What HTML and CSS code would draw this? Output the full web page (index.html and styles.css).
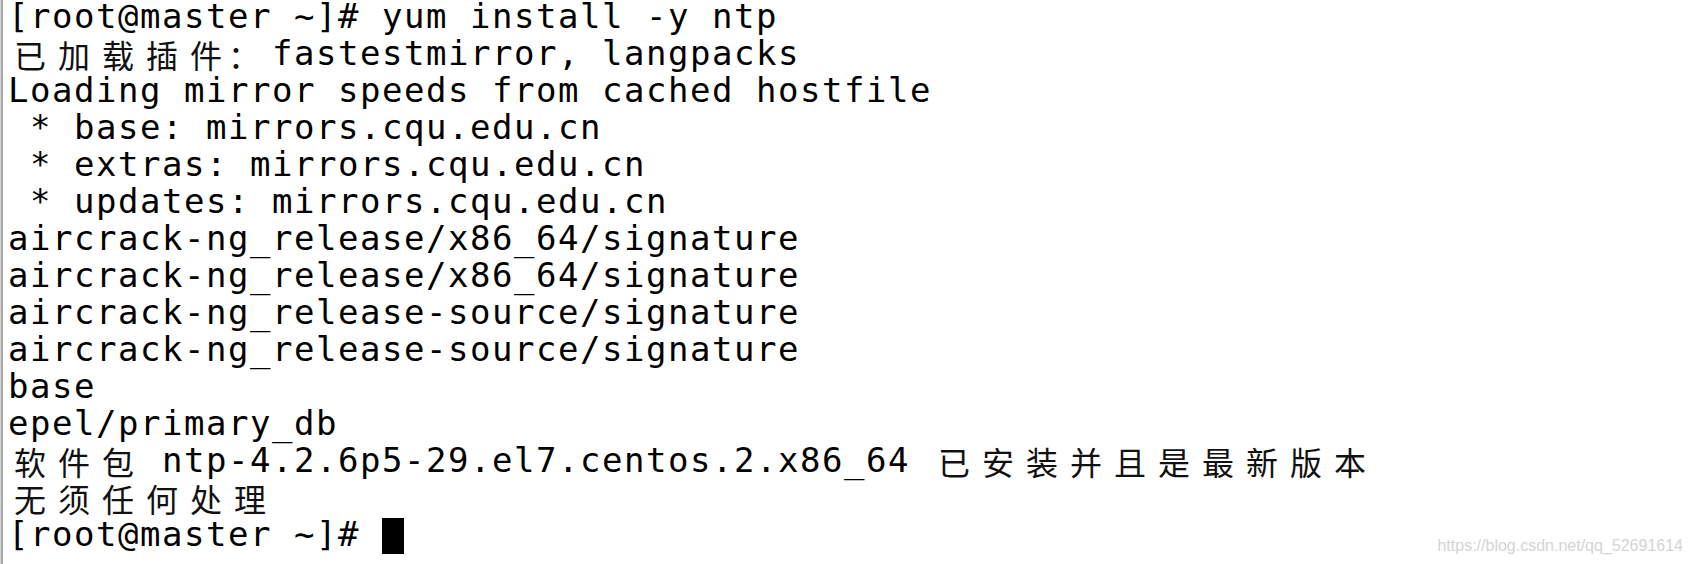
FILE: index.html
```html
<!DOCTYPE html>
<html lang="zh-CN">
<head>
<meta charset="utf-8">
<title>terminal</title>
<link rel="stylesheet" href="styles.css">
</head>
<body>
<div class="term">
  <div class="line">[root@master ~]# yum install -y ntp</div>
  <div class="line"><span class="w">已</span><span class="w">加</span><span class="w">载</span><span class="w">插</span><span class="w">件</span><span class="w p">：</span>fastestmirror, langpacks</div>
  <div class="line">Loading mirror speeds from cached hostfile</div>
  <div class="line"> * base: mirrors.cqu.edu.cn</div>
  <div class="line"> * extras: mirrors.cqu.edu.cn</div>
  <div class="line"> * updates: mirrors.cqu.edu.cn</div>
  <div class="line">aircrack-ng_release/x86_64/signature</div>
  <div class="line">aircrack-ng_release/x86_64/signature</div>
  <div class="line">aircrack-ng_release-source/signature</div>
  <div class="line">aircrack-ng_release-source/signature</div>
  <div class="line">base</div>
  <div class="line">epel/primary_db</div>
  <div class="line"><span class="w">软</span><span class="w">件</span><span class="w">包</span> ntp-4.2.6p5-29.el7.centos.2.x86_64 <span class="w">已</span><span class="w">安</span><span class="w">装</span><span class="w">并</span><span class="w">且</span><span class="w">是</span><span class="w">最</span><span class="w">新</span><span class="w">版</span><span class="w">本</span></div>
  <div class="line"><span class="w">无</span><span class="w">须</span><span class="w">任</span><span class="w">何</span><span class="w">处</span><span class="w">理</span></div>
  <div class="line">[root@master ~]# <span class="cursor"></span></div>
</div>
<div class="watermark">https://blog.csdn.net/qq_52691614</div>
</body>
</html>
```

FILE: styles.css
```css
html, body {
  margin: 0;
  padding: 0;
  background: #ffffff;
}
body {
  position: relative;
  width: 1693px;
  height: 564px;
  overflow: hidden;
}
.term {
  height: 564px;
  box-sizing: border-box;
  border-left: 1px solid #d8d8d8;
  box-shadow: inset 2px 0 0 #a6a6a6;
  padding-left: 7px;
  font-family: "DejaVu Sans Mono", "Liberation Mono", monospace;
  font-size: 34px;
  letter-spacing: 1.53px;
  color: #000000;
}
.line {
  height: 37px;
  line-height: 33px;
  white-space: pre;
}
.w {
  display: inline-block;
  width: 44px;
  height: 37px;
  vertical-align: top;
  text-align: center;
  font-family: "Noto Sans CJK SC", sans-serif;
  font-size: 32px;
  line-height: 35px;
  letter-spacing: 0;
  color: #111111;
}
.w.p {
  text-align: left;
}
.cursor {
  display: inline-block;
  width: 22px;
  height: 36px;
  background: #000000;
  vertical-align: top;
}
.watermark {
  position: absolute;
  right: 10px;
  top: 537px;
  font-family: "Liberation Sans", Arial, sans-serif;
  font-size: 16px;
  color: #d4d4d4;
  white-space: nowrap;
}
```
